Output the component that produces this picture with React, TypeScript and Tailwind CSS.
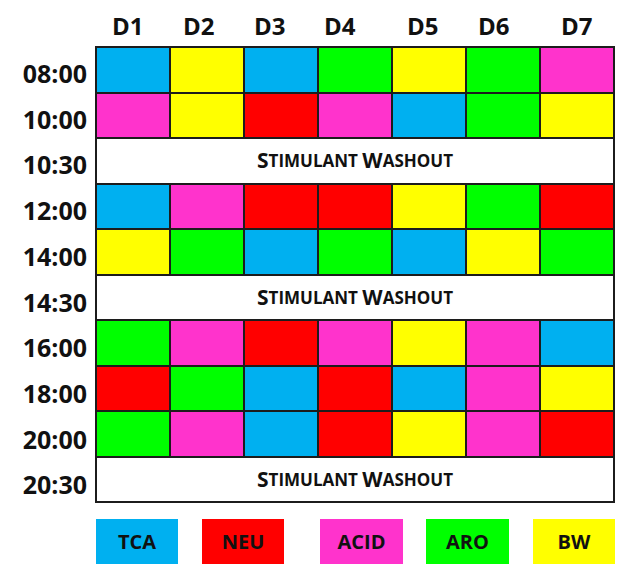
import React from "react";

type C = "b" | "y" | "g" | "m" | "r";
const colorClass: Record<C, string> = {
  b: "bg-[#00b0f0]",
  y: "bg-[#ffff00]",
  g: "bg-[#00ff00]",
  m: "bg-[#ff33cc]",
  r: "bg-[#ff0000]",
};

type Row = { label: string; cells?: C[] };

const rows: Row[] = [
  { label: "08:00", cells: ["b", "y", "b", "g", "y", "g", "m"] },
  { label: "10:00", cells: ["m", "y", "r", "m", "b", "g", "y"] },
  { label: "10:30" },
  { label: "12:00", cells: ["b", "m", "r", "r", "y", "g", "r"] },
  { label: "14:00", cells: ["y", "g", "b", "g", "b", "y", "g"] },
  { label: "14:30" },
  { label: "16:00", cells: ["g", "m", "r", "m", "y", "m", "b"] },
  { label: "18:00", cells: ["r", "g", "b", "r", "b", "m", "y"] },
  { label: "20:00", cells: ["g", "m", "b", "r", "y", "m", "r"] },
  { label: "20:30" },
];

const headers = [
  { t: "D1", w: "w-[71px]" },
  { t: "D2", w: "w-[71px]" },
  { t: "D3", w: "w-[70px]" },
  { t: "D4", w: "w-[83px]" },
  { t: "D5", w: "w-[71px]" },
  { t: "D6", w: "w-[83px]" },
  { t: "D7", w: "w-[40px]" },
];

function Washout() {
  return (
    <div className="col-span-7 bg-white flex items-center justify-center font-bold text-[#111] leading-none">
      <span className="text-[21px]">S</span>
      <span className="text-[17px]">TIMULANT</span>
      <span className="text-[17px]">&nbsp;</span>
      <span className="text-[21px]">W</span>
      <span className="text-[17px]">ASHOUT</span>
    </div>
  );
}

export default function App() {
  return (
    <div className="w-[627px] h-[565px] bg-white overflow-hidden font-['Open_Sans',sans-serif] text-[#111]">
      {/* headers */}
      <div className="flex h-[46px] pt-[14px] pl-[112px] text-[24px] leading-[24px] font-bold">
        {headers.map((h) => (
          <div key={h.t} className={h.w}>
            {h.t}
          </div>
        ))}
      </div>

      {/* body */}
      <div className="flex">
        <div className="w-[95px] h-[457px] grid grid-rows-10 pr-[8px]">
          {rows.map((r) => (
            <div
              key={r.label}
              className="flex justify-end pt-[15px] text-[25px] leading-[25px] font-bold"
            >
              {r.label}
            </div>
          ))}
        </div>
        <div className="w-[520px] h-[457px] grid grid-cols-7 grid-rows-10 gap-[2px] p-[2px] bg-[#1c1c1c]">
          {rows.map((r) =>
            r.cells ? (
              r.cells.map((c, i) => (
                <div key={r.label + i} className={colorClass[c]} />
              ))
            ) : (
              <Washout key={r.label} />
            )
          )}
        </div>
      </div>

      {/* legend */}
      <div className="flex mt-[16px] h-[45px] text-[20px] font-bold">
        <div className="ml-[96px] w-[82px] bg-[#00b0f0] flex items-center justify-center">TCA</div>
        <div className="ml-[24px] w-[82px] bg-[#ff0000] flex items-center justify-center">NEU</div>
        <div className="ml-[36px] w-[83px] bg-[#ff33cc] flex items-center justify-center">ACID</div>
        <div className="ml-[23px] w-[83px] bg-[#00ff00] flex items-center justify-center">ARO</div>
        <div className="ml-[24px] w-[82px] bg-[#ffff00] flex items-center justify-center">BW</div>
      </div>
    </div>
  );
}
